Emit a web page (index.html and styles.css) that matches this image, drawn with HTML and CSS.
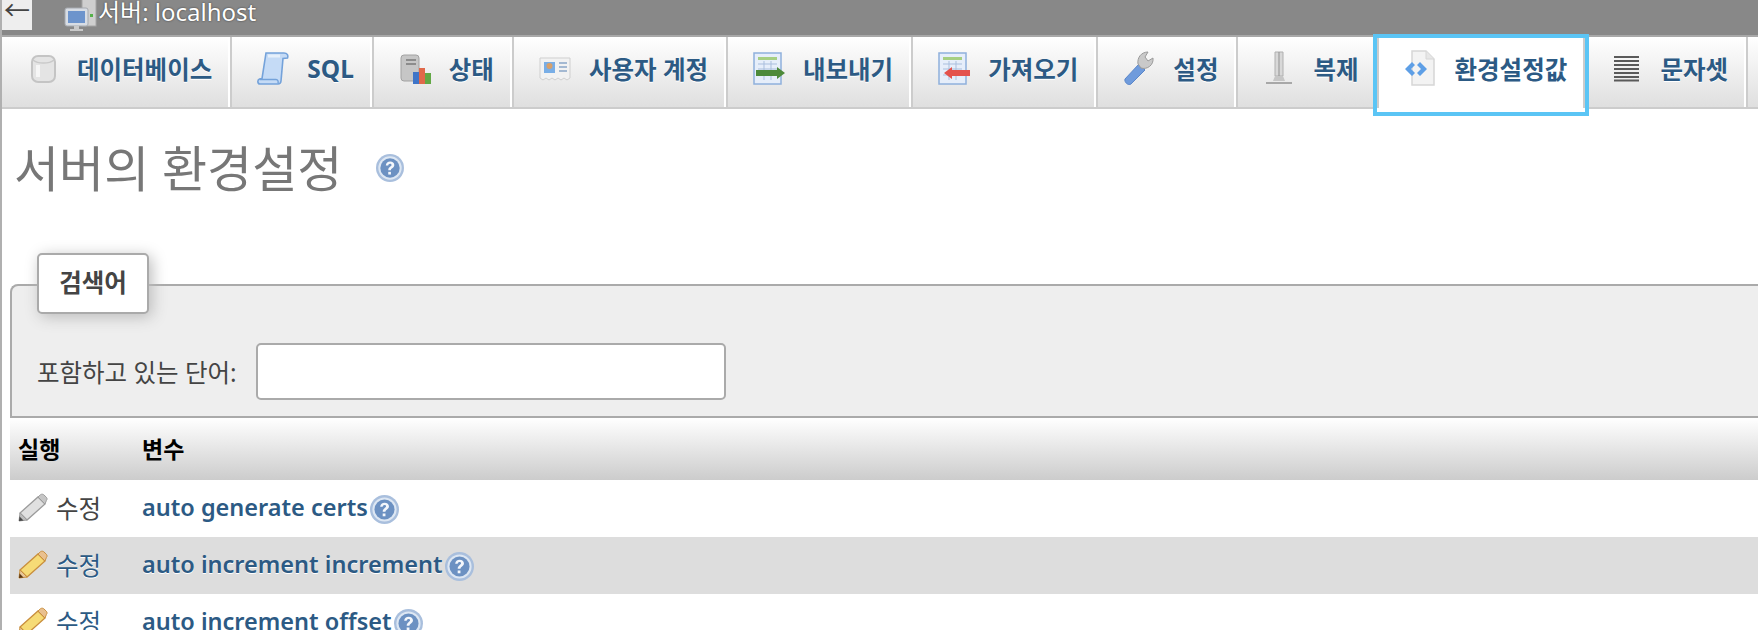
FILE: index.html
```html
<!DOCTYPE html>
<html lang="ko">
<head>
<meta charset="utf-8">
<title>서버의 환경설정</title>
<link rel="stylesheet" href="styles.css">
</head>
<body>
<svg class="defs" width="0" height="0" aria-hidden="true">
  <defs>
    <g id="help">
      <circle cx="12" cy="12" r="12" fill="#a9bfdd"/>
      <circle cx="12" cy="12" r="10" fill="#dde7f3"/>
      <circle cx="12" cy="12" r="8.300" fill="#6c91c2"/>
      <path d="M8.400 9.800c.2-2.200 1.700-3.400 3.700-3.400 2.100 0 3.600 1.200 3.600 3 0 1.400-.9 2.200-1.800 2.800-.8.500-1.100.9-1.100 1.700h-2.300c0-1.600.6-2.300 1.500-3 .8-.6 1.300-.9 1.300-1.500 0-.7-.6-1.100-1.300-1.100-.9 0-1.400.6-1.500 1.500z" fill="#f4f7fb"/>
      <rect x="10.500" y="15.300" width="2.300" height="2.300" fill="#f4f7fb"/>
    </g>
    <g id="pencil">
      <path class="pencil-body" d="M2 20L20 4l7 7L9 27z"/>
      <path class="pencil-cap" d="M20 4l2.500-2.300c1-.7 2.200-.7 3.200 0l2.700 2.600c.9 1 .9 2.200 0 3.200L27 11z"/>
      <path class="pencil-wood" d="M2 20l7 7-8 1z"/>
      <path class="pencil-tip" d="M1 28l.6-4.500 3.900 3.900z"/>
    </g>
  </defs>
</svg>
<div class="page">
  <header class="topbar">
    <span class="back">←</span>
    <svg class="server-icon" width="33" height="33" viewBox="0 0 33 33">
      <rect x="18" y="-2" width="14" height="28" fill="#cfcfcf" stroke="#a4a4a4"/>
      <rect x="26" y="14" width="3" height="3" fill="#55b04a"/>
      <rect x="1" y="8" width="23" height="18" rx="2" fill="#d8dde4" stroke="#a5a9af"/>
      <rect x="4" y="11" width="17" height="12" fill="#6d94cc"/>
      <path d="M10 26h5v3h4v2H6v-2h4z" fill="#c9c9c9"/>
    </svg>
    <span class="server-name">서버: localhost</span>
  </header>

  <nav class="tabs">
    <a class="tab">
      <svg class="tab-icon" viewBox="0 0 30 36"><rect x="4" y="6" width="23" height="26" rx="6" fill="#e4e4e4" stroke="#c4c4c4" stroke-width="2"/><path d="M5 10c5 4 16 4 21 0" fill="none" stroke="#c9c9c9" stroke-width="1.500"/><path d="M10 15v12" stroke="#f6f6f6" stroke-width="4"/></svg>
      <span>데이터베이스</span>
    </a>
    <a class="tab">
      <svg class="tab-icon" viewBox="0 0 32 36"><path d="M9 3h18c3 0 4.500 2 3.500 5l-4.500.5L24 31c-.2 2-1.500 3-3 3H3c-2.500 0-3-4-.5-5L5 28.500z" fill="#c5dbf6" stroke="#74a2da" stroke-width="1.600"/><path d="M3 29.500h16c2 0 2.500 2 2 4" fill="none" stroke="#74a2da" stroke-width="1.400"/><path d="M11 6h12" stroke="#e6f0fb" stroke-width="3"/></svg>
      <span>SQL</span>
    </a>
    <a class="tab">
      <svg class="tab-icon" viewBox="0 0 32 36"><rect x="2" y="5" width="18" height="26" rx="3" fill="#c6c6c6" stroke="#a2a2a2"/><rect x="7" y="9" width="10" height="2" fill="#8c8c8c"/><rect x="7" y="13" width="10" height="2" fill="#8c8c8c"/><rect x="14" y="22" width="6" height="12" fill="#3f75c8"/><rect x="20" y="18" width="6" height="16" fill="#e0694a"/><rect x="26" y="23" width="6" height="11" fill="#62a845"/></svg>
      <span>상태</span>
    </a>
    <a class="tab">
      <svg class="tab-icon" viewBox="0 0 32 36"><path d="M1 8h30v20l-3 2-3-2-3 2-3-2-3 2-3-2-3 2-3-2-3 2-3-2z" fill="#f2f2f2" stroke="#cfcfcf"/><rect x="5" y="12" width="11" height="11" fill="#79aee6"/><circle cx="10.500" cy="16" r="3" fill="#d8a06a"/><path d="M20 13h8M20 17h8M20 21h8" stroke="#a4b9d2" stroke-width="2"/></svg>
      <span>사용자 계정</span>
    </a>
    <a class="tab">
      <svg class="tab-icon" viewBox="0 0 32 36"><rect x="1" y="3" width="27" height="31" fill="#e6eefa" stroke="#8fb0dc" stroke-width="1.500"/><rect x="5" y="7" width="19" height="3" fill="#a6cf82"/><path d="M5 14h19M5 19h19M5 25h19M11 11v19M18 11v19" stroke="#a9bedd"/><path d="M3 20h21v-3l8 6-8 6v-3H3z" fill="#4d8a3a"/></svg>
      <span>내보내기</span>
    </a>
    <a class="tab">
      <svg class="tab-icon" viewBox="0 0 32 36"><rect x="1" y="3" width="27" height="31" fill="#e6eefa" stroke="#8fb0dc" stroke-width="1.500"/><rect x="5" y="7" width="19" height="3" fill="#a6cf82"/><path d="M5 14h19M5 19h19M5 25h19M11 11v19M18 11v19" stroke="#a9bedd"/><path d="M32 20H14v-3l-8 6 8 6v-3h18z" fill="#e4524c"/></svg>
      <span>가져오기</span>
    </a>
    <a class="tab">
      <svg class="tab-icon" viewBox="0 0 32 36"><path d="M2 29L16 14l6 6L8 34c-3 2-7-2-6-5z" fill="#6f9bdc" stroke="#5a86c8"/><path d="M15 14c-1-6 3-12 10-12l-3 5 3 4 5-3c1 7-6 12-12 10z" fill="#c9c9c9" stroke="#999"/></svg>
      <span>설정</span>
    </a>
    <a class="tab">
      <svg class="tab-icon" viewBox="0 0 32 36"><path d="M12 2h8v24h-8z" fill="#d8d8d8" stroke="#b0b0b0"/><path d="M16 2v24" stroke="#909090"/><path d="M12 26h8l2 5H10z" fill="#c6c6c6"/><path d="M3 32h26v2H3z" fill="#a8a8a8"/></svg>
      <span>복제</span>
    </a>
    <a class="tab active">
      <svg class="tab-icon" viewBox="0 0 32 36"><path d="M8 1h14l8 8v26H8z" fill="#f3f3f3" stroke="#d6d6d6" stroke-width="1.500"/><path d="M22 1v8h8" fill="#e6e6e6" stroke="#d6d6d6"/><path d="M8 12l-7 7 7 7 3-3-4-4 4-4zM16 12l7 7-7 7-3-3 4-4-4-4z" fill="#5e9fe6"/></svg>
      <span>환경설정값</span>
    </a>
    <a class="tab">
      <svg class="tab-icon" viewBox="0 0 32 36"><path d="M3 7h25M3 11h25M3 15h25M3 19h25M3 23h25M3 27h25M3 30.500h25" stroke="#5a5a5a" stroke-width="2.200"/></svg>
      <span>문자셋</span>
    </a>
    <a class="tab last"></a>
  </nav>

  <main class="content">
    <h1 class="title">서버의 환경설정<svg class="help-lg" viewBox="0 0 24 24"><use href="#help"/></svg></h1>

    <fieldset class="filter">
      <legend class="legend">검색어</legend>
      <label class="filter-row">
        <span class="filter-label">포함하고 있는 단어:</span>
        <input class="filter-input" type="text">
      </label>
    </fieldset>

    <table class="vars">
      <thead>
        <tr><th class="col-action">실행</th><th>변수</th></tr>
      </thead>
      <tbody>
        <tr>
          <td class="col-action"><span class="edit disabled"><svg class="pencil" viewBox="0 0 30 29"><use href="#pencil"/></svg>수정</span></td>
          <td><a class="var-name">auto generate certs</a><svg class="help" viewBox="0 0 24 24"><use href="#help"/></svg></td>
        </tr>
        <tr class="marked">
          <td class="col-action"><span class="edit"><svg class="pencil" viewBox="0 0 30 29"><use href="#pencil"/></svg>수정</span></td>
          <td><a class="var-name">auto increment increment</a><svg class="help" viewBox="0 0 24 24"><use href="#help"/></svg></td>
        </tr>
        <tr>
          <td class="col-action"><span class="edit"><svg class="pencil" viewBox="0 0 30 29"><use href="#pencil"/></svg>수정</span></td>
          <td><a class="var-name">auto increment offset</a><svg class="help" viewBox="0 0 24 24"><use href="#help"/></svg></td>
        </tr>
      </tbody>
    </table>
  </main>
</div>
</body>
</html>
```
FILE: styles.css
```css
* { box-sizing: border-box; }
html, body { margin: 0; height: 630px; overflow: hidden; background: #fff; }
body { font-family: "Noto Sans", "Noto Sans CJK KR", sans-serif; color: #444; }
.defs { position: absolute; }
.page { border-left: 2px solid #b0b0b0; height: 630px; overflow: hidden; }

.topbar { height: 37px; background: #888; border-bottom: 2px solid #a8a8a8; display: flex; align-items: flex-start; color: #fff; font-size: 24px; }
.back { width: 30px; height: 30px; background: #eee; color: #444; font-size: 26px; line-height: 20px; text-align: center; flex: none; overflow: hidden; }
.server-icon { margin-left: 32px; margin-right: 1px; flex: none; filter: blur(.5px); }
.server-name { line-height: 24px; text-shadow: 0 0 2px #333; }

.tabs { display: flex; height: 72px; background: #ccc; border-bottom: 2px solid #ccc; }
.tab { position: relative; display: flex; align-items: center; height: 70px; padding: 0 16px 8px 25px; font-size: 24.5px; font-weight: 700; color: #2c5a84; text-shadow: 0 1px 0 #fff; background: linear-gradient(#fff, #dfdfdf); border-right: 2px solid #fff; margin-right: 2px; flex: none; white-space: nowrap; }
.tab-icon { width: 32px; height: 36px; margin-right: 18px; flex: none; filter: blur(.5px); }
.active { width: 216px; height: 82px; margin: -3px -3px -7px -6px; padding: 0 0 14px 27px; border: 4px solid #5bc5f5; z-index: 1; text-shadow: none; background: linear-gradient(#ccc, #ccc) left top / 2px 70px no-repeat, linear-gradient(#ccc, #ccc) right top / 2px 70px no-repeat, #fff; }
.active .tab-icon { margin-right: 19px; }
.last { flex: 1; padding: 0; border-right: 0; margin: 0; }

.content { padding: 0 0 0 8px; }
.title { margin: 0 0 0 4px; height: 118px; font-size: 49px; line-height: 60px; font-weight: 400; color: #777; display: flex; align-items: center; }
.help-lg { width: 28px; height: 28px; margin-left: 34px; filter: blur(.4px); }

.filter { margin: 57px 0 0; padding: 0 0 0 25px; height: 134px; background: #eee; border: 2px solid #aaa; border-radius: 8px 0 0 0; border-right: 0; min-width: 0; position: relative; }
.legend { position: absolute; left: 25px; top: -33px; width: 112px; height: 61px; padding: 0; background: #fff; border: 2px solid #aaa; border-radius: 5px; font-size: 24.5px; font-weight: 700; line-height: 55px; text-align: center; box-shadow: 3px 3px 15px #bbb; }
.filter-row { display: flex; align-items: center; gap: 19px; padding-top: 57px; font-size: 24.5px; }
.filter-input { width: 470px; height: 57px; background: #fff; border: 2px solid #aaa; border-radius: 5px; }

.vars { width: 100%; border-collapse: collapse; font-size: 23.5px; }
.vars th { height: 62px; text-align: left; color: #000; font-size: 23px; padding: 0 0 3px 8px; background: linear-gradient(#fff, #ccc); }
.vars td { height: 57px; padding: 0 0 2px 8px; }
.col-action { width: 124px; }
.marked td { background: #ddd; }
.edit { display: flex; align-items: center; font-size: 24.5px; color: #2c5a84; }
.marked .edit, .marked .var-name { text-shadow: 0 1px 0 #fff; }
.disabled { color: #444; }
.pencil { width: 30px; height: 29px; margin-right: 8px; --p-fill: #f6db76; --p-line: #c98f3e; --p-cap: #e9c08f; --p-wood: #e8c79a; --p-tip: #5a3510; filter: blur(.3px); }
.disabled .pencil { --p-fill: #e0e0e0; --p-line: #9c9c9c; --p-cap: #c6c6c6; --p-wood: #bdbdbd; --p-tip: #444; }
.pencil-body { fill: var(--p-fill); stroke: var(--p-line); stroke-width: 1.300; }
.pencil-cap { fill: var(--p-cap); stroke: var(--p-line); stroke-width: 1; }
.pencil-wood { fill: var(--p-wood); stroke: var(--p-line); stroke-width: 1; }
.pencil-tip { fill: var(--p-tip); }
.var-name { color: #2c5a84; font-weight: 600; }
.help { width: 29px; height: 29px; vertical-align: middle; margin-left: 2px; filter: blur(.4px); }
```
